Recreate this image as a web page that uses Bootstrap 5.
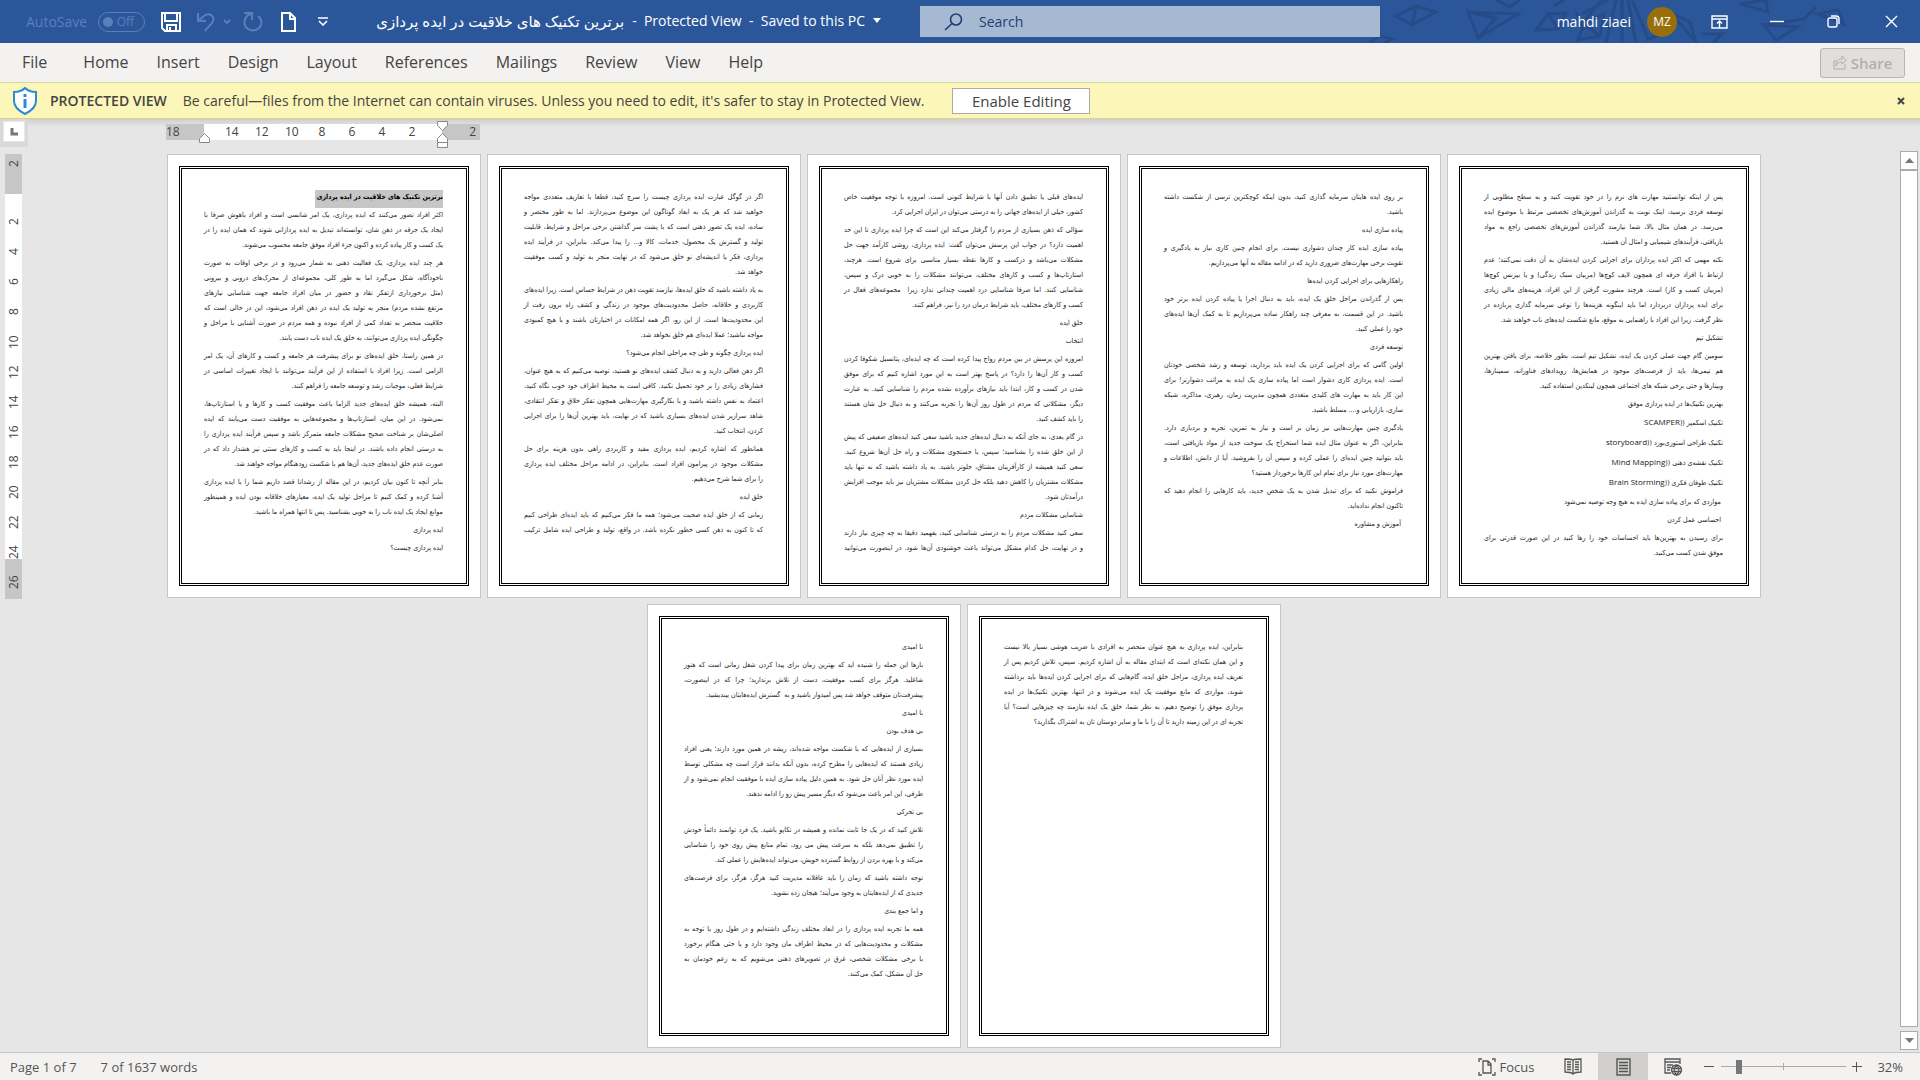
<!DOCTYPE html>
<html lang="en">
<head>
<meta charset="utf-8">
<meta name="viewport" content="width=device-width, initial-scale=1">
<title>برترین تکنیک های خلاقیت در ایده پردازی - Protected View</title>
<link href="https://cdn.jsdelivr.net/npm/bootstrap@5.3.0/dist/css/bootstrap.min.css" rel="stylesheet">
<style>
body{font-family:"Open Sans","DejaVu Sans",sans-serif;background:#e6e6e6;color:#444;font-size:14px;line-height:20px}
svg{display:block;fill:none;stroke:currentColor;flex:none}
button{color:inherit}
.titlebar{height:43px;background:#2b579a;color:#fff;position:relative}
.titlebar .texture{position:absolute;right:0;top:0;color:#264b87}
.titlebar>*:not(.texture){position:relative}
.dim{color:#5b80b9}
.plain-btn{border:0;background:none;padding:0;display:flex;align-items:center;justify-content:center;flex-shrink:0}
.side-start{flex:1 1 0;min-width:0}
.side-end{flex:0 0 540px;padding-right:18px}
.switch-pill{width:47px;height:20px;border:1px solid #5b80b9;border-radius:10px;font-size:12px;margin-left:11px;padding:0 10px 0 4px;color:#5b80b9}
.switch-pill span{width:10px;height:10px;border-radius:50%;background:#5b80b9}
.autosave{padding-left:26px}
.doc-title{font-size:14px;white-space:nowrap;padding-bottom:2px}
.doc-title bdi{font-size:15px}
.find-box{width:460px;height:31px;background:#a6b9d2;color:#1e3f76}
.find-box input{border:0;background:none;color:#1e3f76;outline:0;font-size:14px;padding:0}
.find-box input::placeholder{color:#1e3f76;opacity:1}
.avatar{width:30px;height:30px;border-radius:50%;background:#986f0b;font-size:12px}
.ribbon{height:39px;background:#f3f2f1}
.ribbon .nav{padding-bottom:2px}
.ribbon .nav-link{padding:0 14px;color:#444;font-size:16px;line-height:36px}
.ribbon .nav-item:first-child{margin-right:8px}
.share-btn{height:30px;width:85px;border:1px solid #b9b7b5;border-radius:3px;background:#e1dfdd;color:#b1afad;font-weight:600;font-size:15px;gap:4px;margin-right:15px}
.notice{height:37px;background:#fcf6b8;border-top:1px solid #d8d6a0;border-bottom:1px solid #d6d38c;color:#444;font-size:14px}
.shield{color:#2a8dd4;margin:0 12px}
.enable-btn{width:138px;height:26px;background:#fff;border:1px solid #ababab;font-size:15px;line-height:20px;margin-left:28px}
.workspace{background:linear-gradient(#cfcfcf,#e6e6e6 8px)}
.left-rail{width:28px;padding-left:5px}
.tab-kind{width:28px;height:28px;margin:0 0 7px -5px;background:#d9d9d9;padding:2px 3px}
.tab-kind div{width:22px;height:21px;background:#fff;border:1px solid #e8e8e8;color:#777}
.vruler,.hruler{font-size:12px;line-height:16px;color:#444}
.vruler{width:17px}
.vruler .turned{writing-mode:vertical-rl;transform:rotate(180deg);width:17px;text-align:center;line-height:17px}
.v-out{height:40px;background:#c6c6c6;padding-bottom:6px}
.vruler .v-out.first{text-align:end}
.v-in{height:30px}
.vwhite{height:365px;background:#fff;padding-top:13px}
.sheets{max-width:1594px}
.hruler{height:16px;width:314px;margin:5px 0 0 -1px;position:relative}
.h-out{width:38px;background:#c6c6c6}
.h-in{width:239px;background:#fff;padding-left:13px}
.h-in span{width:30px;text-align:center}
.stop{position:absolute;color:#888}
.stop-left{left:33px;top:9px}
.stop-right{left:271px;top:-3px}
.desk{gap:6px;padding:14px 0 4px}
.paper{width:314px;height:444px;background:#fff;border:1px solid #c6c6c6;padding:11px}
.frame{height:420px;border:3px double #000;padding:21px 23px 0 22px;direction:rtl;font-family:"DejaVu Sans Condensed","DejaVu Sans",sans-serif;font-size:7px;line-height:15px;color:#222;white-space:nowrap}
.frame p{margin:0 0 3px;text-align:justify;text-align-last:justify}
.frame .solo,.frame .tail{display:block;text-align:start;text-align-last:start}
.frame .latin{line-height:17px}
.frame .en{font-family:"Open Sans",sans-serif;font-size:8px;line-height:8px}
.frame h1{font-size:7px;line-height:15px;font-weight:700;margin:0;padding:0 0 3px 2px;width:fit-content;background:#c6c6c6;color:#000}
.scroll-rail{width:20px;padding:32px 2px 2px 0}
.scroll-rail button{width:18px;height:19px;background:#fff;border:1px solid #ababab;color:#777}
.thumb-bar{background:#fff;border:1px solid #ababab}
.status{height:28px;background:#f3f2f1;border-top:1px solid #c6c6c6;font-size:13px;color:#555}
.view-btn{width:50px;height:27px}
.view-btn.on{background:#d2d0ce}
.zoom-slide{-webkit-appearance:none;appearance:none;width:125px;height:16px;margin:0;background:linear-gradient(#aaa,#aaa) center/1px 7px no-repeat,linear-gradient(#aaa,#aaa) center/100% 1px no-repeat}
.zoom-slide::-webkit-slider-thumb{-webkit-appearance:none;width:6px;height:14px;background:#777;border:0}
</style>
<script src="https://cdn.jsdelivr.net/npm/bootstrap@5.3.0/dist/js/bootstrap.bundle.min.js"></script>
</head>
<body class="d-flex flex-column min-vh-100">
<header class="titlebar d-flex align-items-center">
  <svg class="texture" width="580" height="43" viewBox="0 0 580 43" stroke-width="3" aria-hidden="true">
    <path d="M56 16l20-10 20 6-24 13zM76 6l-4 19M128 12l28 6-18 20zM128 12l50 2-40 24M196 30l12-16 18-1-8 16zM208 14l10 15M156 0l14 7 10-7M214 6l10-6M30 42l10-6 12 3-8 4M238 40l6-16 20-10-4 22zM244 24l16 12M242 14l26-14M266 43l10-43M282 43V0M296 43L288 0M308 38L292 0M244 30l-8-18M262 0l-22 26M310 14l20 16-24 10M330 12l26 30-6-20zM362 34l20 0-10 10M400 4l28 8-2-12zM424 25l34 2-22 13zM424 25l40-6 12-12M478 14l20-4 6 14z"/>
  </svg>
  <div class="side-start d-flex align-items-center">
    <label class="dim autosave" for="autosave">AutoSave</label>
    <button id="autosave" class="plain-btn switch-pill justify-content-between" role="switch" aria-checked="false"><span></span>Off</button>
    <button class="plain-btn ms-3" aria-label="Save"><svg width="20" height="20" viewBox="0 0 20 20" stroke-width="2"><path d="M1 1h18v18H4l-3-3zM4 1v8h12V1M6 19v-6h9v6M9 15v3"/></svg></button>
    <button class="plain-btn dim" style="margin-left:15px" aria-label="Undo"><svg width="20" height="20" viewBox="0 0 20 20" stroke-width="2"><path d="M2 1v8h8M2 9l6-5c5-4 11 0 9 5-1 3-5 6-8 10"/></svg></button>
    <button class="plain-btn dim" style="margin-left:7px" aria-label="Undo list"><svg width="8" height="6" viewBox="0 0 8 6" stroke-width="2"><path d="M1 1l3 3 3-3"/></svg></button>
    <button class="plain-btn dim" style="margin-left:12px" aria-label="Redo"><svg width="21" height="20" viewBox="0 0 21 20" stroke-width="2"><path d="M1 1h8v7M8 2C0 4 0 14 5 17c5 3 11 1 13-4 1-4 0-7-3-9"/></svg></button>
    <button class="plain-btn" style="margin-left:16px" aria-label="New"><svg width="17" height="20" viewBox="0 0 17 20" stroke-width="2"><path d="M2 1h8l5 5v13H2zM10 1v6h5"/></svg></button>
    <button class="plain-btn" style="margin-left:21px" aria-label="Customize toolbar"><svg width="10" height="9" viewBox="0 0 10 9" stroke-width="1.6"><path d="M0 1h10M1 4l4 4 4-4"/></svg></button>
    <div class="doc-title ms-5 d-flex align-items-center"><bdi dir="rtl" lang="fa">برترین تکنیک های خلاقیت در ایده پردازی</bdi><span class="ms-2">- &nbsp;Protected View &nbsp;- &nbsp;Saved to this PC</span>
      <svg class="ms-2" width="8" height="5" viewBox="0 0 8 5"><path d="M0 0h8L4 5z" fill="currentColor" stroke="none"/></svg></div>
  </div>
  <div class="find-box d-flex align-items-center px-4">
    <svg width="19" height="18" viewBox="0 0 19 18" stroke-width="1.6"><circle cx="12" cy="6.500" r="5.500"/><path d="M8 10.500L1 17"/></svg>
    <input class="ms-3 flex-grow-1" type="search" placeholder="Search" aria-label="Search">
  </div>
  <div class="side-end d-flex align-items-center justify-content-end">
    <span>mahdi ziaei</span>
    <span class="avatar d-flex align-items-center justify-content-center ms-3">MZ</span>
    <button class="plain-btn" style="margin:0 42px 0 34px" aria-label="Ribbon display options"><svg width="17" height="14" viewBox="0 0 17 14" stroke-width="1.4"><path d="M1 1h15v12H1zM1 4h15M8.500 13V6M6 8.500L8.500 6 11 8.500"/></svg></button>
    <button class="plain-btn" style="margin-right:43px" aria-label="Minimize"><svg width="14" height="12" viewBox="0 0 14 12" stroke-width="1.4"><path d="M0 5.500h14"/></svg></button>
    <button class="plain-btn" style="margin-right:45px" aria-label="Restore"><svg width="13" height="13" viewBox="0 0 13 13" stroke-width="1.4"><path d="M1 5q0-2 2-2h5q2 0 2 2v5q0 2-2 2H3q-2 0-2-2zM4 1h5q3 0 3 3v5"/></svg></button>
    <button class="plain-btn me-1" aria-label="Close"><svg width="13" height="13" viewBox="0 0 13 13" stroke-width="1.4"><path d="M1 1l11 11M12 1L1 12"/></svg></button>
  </div>
</header>

<nav class="ribbon d-flex align-items-center justify-content-between">
  <ul class="nav flex-nowrap ps-2">
    <li class="nav-item"><a class="nav-link" href="#">File</a></li>
    <li class="nav-item"><a class="nav-link" href="#">Home</a></li>
    <li class="nav-item"><a class="nav-link" href="#">Insert</a></li>
    <li class="nav-item"><a class="nav-link" href="#">Design</a></li>
    <li class="nav-item"><a class="nav-link" href="#">Layout</a></li>
    <li class="nav-item"><a class="nav-link" href="#">References</a></li>
    <li class="nav-item"><a class="nav-link" href="#">Mailings</a></li>
    <li class="nav-item"><a class="nav-link" href="#">Review</a></li>
    <li class="nav-item"><a class="nav-link" href="#">View</a></li>
    <li class="nav-item"><a class="nav-link" href="#">Help</a></li>
  </ul>
  <button class="share-btn d-flex align-items-center justify-content-center p-0"><svg width="14" height="15" viewBox="0 0 14 15"><path d="M4 6H1v8h11V9M3 11c0-5 2-7 6-7V1l4 4.500L9 9V7C6 7 4 8 3 11z"/></svg>Share</button>
</nav>

<div class="notice d-flex align-items-center">
  <svg class="shield" width="26" height="28" viewBox="0 0 26 28" stroke-width="2"><path fill="#fff" d="M13 1c3 3 7 4 11 4v9c0 6-5 10-11 13C7 24 2 20 2 14V5c4 0 8-1 11-4z"/><path stroke-width="3" d="M13 12v9M13 7v3"/></svg>
  <span class="fw-semibold">PROTECTED VIEW</span>
  <span class="ms-3">Be careful—files from the Internet can contain viruses. Unless you need to edit, it's safer to stay in Protected View.</span>
  <button class="enable-btn p-0">Enable Editing</button>
  <button class="plain-btn ms-auto" style="margin-right:15px" aria-label="Close message"><svg width="8" height="8" viewBox="0 0 8 8" stroke-width="2"><path d="M1 1l6 6M7 1L1 7"/></svg></button>
</div>

<main class="workspace d-flex flex-grow-1">
  <div class="left-rail flex-shrink-0">
    <div class="tab-kind"><div class="d-flex align-items-center justify-content-center"><svg width="8" height="8" viewBox="0 0 8 8" stroke-width="3"><path d="M2 0v6h6"/></svg></div></div>
    <div class="vruler">
      <div class="turned v-out first">2</div>
      <div class="vwhite"><div class="turned v-in">2</div><div class="turned v-in">4</div><div class="turned v-in">6</div><div class="turned v-in">8</div><div class="turned v-in">10</div><div class="turned v-in">12</div><div class="turned v-in">14</div><div class="turned v-in">16</div><div class="turned v-in">18</div><div class="turned v-in">20</div><div class="turned v-in">22</div><div class="turned v-in">24</div></div>
      <div class="turned v-out">26</div>
    </div>
  </div>

  <div class="flex-grow-1">
    <div class="sheets mx-auto">
      <div class="hruler d-flex">
        <div class="h-out">18</div>
        <div class="h-in d-flex"><span>14</span><span>12</span><span>10</span><span>8</span><span>6</span><span>4</span><span>2</span></div>
        <div class="h-out flex-grow-1 text-end pe-1">2</div>
        <svg class="stop stop-left" width="11" height="10" viewBox="0 0 11 10"><path fill="#fff" d="M.5 9.500v-4l5-5 5 5v4z"/></svg>
        <svg class="stop stop-right" width="11" height="28" viewBox="0 0 11 28"><path fill="#fff" d="M.5.5h10v4l-5 5-5-5zM.5 21.500v-4l5-5 5 5v4zM.5 21.500h10v5H.5z"/></svg>
      </div>
    </div>
    <div class="desk d-flex flex-wrap justify-content-center" lang="fa">

<article class="paper"><div class="frame">
<h1>برترین تکنیک های خلاقیت در ایده پردازی</h1>
<p>اکثر افراد تصور می‌کنند که ایده پردازی، یک امر شانسی است و افراد باهوش صرفا با<br>ایجاد یک جرقه در ذهن شان، توانسته‌اند تبدیل به ایده پردازانی شوند که همان ایده را در<span class="tail">یک کسب و کار پیاده کرده و اکنون جزء افراد موفق جامعه محسوب می‌شوند.</span></p>
<p>هر چند ایده پردازی، یک فعالیت ذهنی به شمار می‌رود و در برخی اوقات به صورت<br>ناخودآگاه، شکل می‌گیرد اما به طور کلی، مجموعه‌ای از محرک‌های درونی و بیرونی<br>(مثل برخورداری ازتفکر نقاد و حضور در میان افراد جامعه جهت شناسایی نیازهای<br>مرتفع نشده مردم) منجر به تولید یک ایده در ذهن افراد می‌شود، این در حالی است که<br>خلاقیت منحصر به تعداد کمی از افراد نبوده و همه مردم در صورت آشنایی با مراحل و<span class="tail">چگونگی ایده پردازی می‌توانند، به خلق یک ایده ناب دست یابند.</span></p>
<p>در همین راستا، خلق ایده‌های نو برای پیشرفت هر جامعه و کسب و کارهای آن، یک امر<br>الزامی است. زیرا افراد با استفاده از این فرآیند می‌توانند با ایجاد تغییرات اساسی در<span class="tail">شرایط فعلی، موجبات رشد و توسعه جامعه را فراهم کنند.</span></p>
<p>البته، همیشه خلق ایده‌های جدید الزاما باعث موفقیت کسب و کارها و یا استارتاپ‌ها،<br>نمی‌شود. در این میان، استارتاپ‌ها و مجموعه‌هایی به موفقیت دست می‌یابند که ایده<br>اصلی‌شان بر شناخت صحیح مشکلات جامعه متمرکز باشد و سپس فرآیند ایده پردازی را<br>به درستی انجام داده باشند. در اینجا باید به کسب و کارهای سنتی نیز هشدار داد که در<span class="tail">صورت عدم خلق ایده‌های جدید، آن‌ها هم با شکست زودهنگام مواجه خواهند شد.</span></p>
<p>بنابر آنچه تا کنون بیان کردیم، در این مقاله از رشدانا قصد داریم شما را با ایده پردازی<br>آشنا کرده و کمک کنیم تا مراحل تولید یک ایده، معیارهای خلاقانه بودن ایده و همینطور<span class="tail">موانع ایجاد یک ایده ناب را به خوبی بشناسید. پس تا انتها همراه ما باشید.</span></p>
<p class="solo">ایده پردازی</p>
<p class="solo">ایده پردازی چیست؟</p>
</div></article>

<article class="paper"><div class="frame">
<p>اگر در گوگل عبارت ایده پردازی چیست را سرچ کنید، قطعا با تعاریف متعددی مواجه<br>خواهید شد که هر یک به ابعاد گوناگون این موضوع می‌پردازند. اما به طور مختصر و<br>ساده، ایده یک تصور ذهنی است که با پشت سر گذاشتن برخی مراحل و شرایط، قابلیت<br>تولید و گسترش یک محصول، خدمات، کالا و... را پیدا می‌کند. بنابراین، در فرآیند ایده<br>پردازی، فکر یا اندیشه‌ای نو خلق می‌شود که در نهایت منجر به تولید و کسب موفقیت<span class="tail">خواهد شد.</span></p>
<p>به یاد داشته باشید که خلق ایده‌ها، نیازمند تقویت ذهن در شرایط حساس است. زیرا ایده‌های<br>کاربردی و خلاقانه، حاصل محدودیت‌های موجود در زندگی و کشف راه برون رفت از<br>این محدودیت‌ها است. از این رو، اگر همه امکانات در اختیارتان باشند و با هیچ کمبودی<span class="tail">مواجه نباشید؛ عملا ایده‌ای هم خلق نخواهد شد.</span></p>
<p class="solo">ایده پردازی چگونه و طی چه مراحلی انجام می‌شود؟</p>
<p>اگر ذهن فعالی دارید و به دنبال کشف ایده‌های نو هستید، توصیه می‌کنیم که به هیچ عنوان،<br>فشارهای زیادی را بر خود تحمیل نکنید. کافی است به محیط اطراف خود خوب نگاه کنید،<br>اعتماد به نفس داشته باشید و با بکارگیری مهارت‌هایی همچون تفکر خلاق و تفکر انتقادی،<br>شاهد سرازیر شدن ایده‌های بسیاری باشید که در نهایت، باید بهترین آن‌ها را برای اجرایی<span class="tail">کردن، انتخاب کنید.</span></p>
<p>همانطور که اشاره کردیم، ایده پردازی مفید و کاربردی راهی بدون هزینه برای حل<br>مشکلات موجود در پیرامون افراد است. بنابراین، در ادامه مراحل مختلف ایده پردازی<span class="tail">را برای شما شرح می‌دهیم.</span></p>
<p class="solo">خلق ایده</p>
<p>زمانی که از خلق ایده صحبت می‌شود؛ همه ما فکر می‌کنیم که باید ایده‌ای طراحی کنیم<br>که تا کنون به ذهن کسی خطور نکرده باشد. در واقع، تولید و طراحی ایده شامل ترکیب</p>
</div></article>

<article class="paper"><div class="frame">
<p>ایده‌های قبلی یا تطبیق دادن آنها با شرایط کنونی است. امروزه با توجه موقعیت خاص<span class="tail">کشور، خیلی از ایده‌های جهانی را به درستی می‌توان در ایران اجرایی کرد.</span></p>
<p>سؤالی که ذهن بسیاری از مردم را گرفتار می‌کند این است که چرا ایده پردازی تا این حد<br>اهمیت دارد؟ در جواب این پرسش می‌توان گفت: ایده پردازی، روشی کارآمد جهت حل<br>مشکلات می‌باشد و درکسب و کارها نقطه بسیار مناسبی برای شروع است. هرچند،<br>استارتاپ‌ها و کسب و کارهای مختلف، می‌توانند مشکلات را به خوبی درک و سپس،<br>شناسایی کنند. اما صرفا شناسایی درد اهمیت چندانی ندارد زیرا&nbsp; مجموعه‌های فعال در<span class="tail">کسب و کارهای مختلف، باید شرایط درمان درد را نیز، فراهم کنند.</span></p>
<p class="solo">خلق ایده</p>
<p class="solo">انتخاب</p>
<p>امروزه این پرسش در بین مردم رواج پیدا کرده است که چه ایده‌ای، پتانسیل شکوفا کردن<br>کسب و کار آن‌ها را دارد؟ در پاسخ بهتر است به این مورد اشاره کنیم که برای موفق<br>شدن در کسب و کار، ابتدا باید نیازهای برآورده نشده مردم را شناسایی کنید. به عبارت<br>دیگر، مشکلاتی که مردم در طول روز آن‌ها را تجربه می‌کنند و به دنبال حل شان هستند<span class="tail">را باید کشف کنید.</span></p>
<p>در گام بعدی، به جای آنکه به دنبال ایده‌های جدید باشید سعی کنید ایده‌های ضعیفی که پیش<br>از این خلق شده را بشناسید؛ سپس، با جستجوی مشکلات و راه حل آن‌ها شروع کنید.<br>سعی کنید همیشه از کارآفرینان مشتاق، جلوتر باشید. به یاد داشته باشید که نه تنها باید<br>مشکلات مشتریان را کاهش دهید بلکه حل کردن مشکلات مشتریان نیز باید موجب افزایش<span class="tail">درآمدتان شود.</span></p>
<p class="solo">شناسایی مشکلات مردم</p>
<p>سعی کنید مشکلات مردم را به درستی شناسایی کنید، بفهمید دقیقا به چه چیزی نیاز دارند<br>و در نهایت، حل کدام مشکل می‌تواند باعث خوشنودی آن‌ها شود. در اینصورت می‌توانید</p>
</div></article>

<article class="paper"><div class="frame">
<p>بر روی ایده هایتان سرمایه گذاری کنید، بدون اینکه کوچکترین ترسی از شکست داشته<span class="tail">باشید.</span></p>
<p class="solo">پیاده سازی ایده</p>
<p>پیاده سازی ایده کار چندان دشواری نیست. برای انجام چنین کاری نیاز به یادگیری و<span class="tail">تقویت برخی مهارت‌های ضروری دارید که در ادامه مقاله به آنها می‌پردازیم.</span></p>
<p class="solo">راهکارهایی برای اجرایی کردن ایده‌ها</p>
<p>پس از گذراندن مراحل خلق یک ایده، باید به دنبال اجرا یا پیاده کردن ایده برتر خود<br>باشید. در این قسمت، به معرفی چند راهکار ساده می‌پردازیم تا به کمک آن‌ها ایده‌های<span class="tail">خود را عملی کنید.</span></p>
<p class="solo">توسعه فردی</p>
<p>اولین گامی که برای اجرایی کردن یک ایده باید بردارید، توسعه و رشد شخصی خودتان<br>است. ایده پردازی کاری دشوار است اما پیاده سازی یک ایده به مراتب دشوارتر! برای<br>این کار باید به مهارت های کلیدی متعددی همچون مدیریت زمان، رهبری، مذاکره، شبکه<span class="tail">سازی، بازاریابی و.... مسلط باشید.</span></p>
<p>یادگیری چنین مهارت‌هایی نیز زمان بر است و نیاز به تمرین، تجربه و بردباری دارد.<br>بنابراین، اگر به عنوان مثال ایده شما استخراج یک سوخت جدید از مواد بازیافتی است،<br>باید بتوانید چنین ایده‌ای را عملی کرده و سپس آن را بفروشید. آیا از دانش، اطلاعات و<span class="tail">مهارت‌های مورد نیاز برای تمام این کارها برخوردار هستید؟</span></p>
<p>فراموش نکنید که برای تبدیل شدن به یک شخص جدید، باید کارهایی را انجام دهید که<span class="tail">تاکنون انجام نداده‌اید.</span></p>
<p class="solo">&nbsp;آموزش و مشاوره</p>
</div></article>

<article class="paper"><div class="frame">
<p>پس از اینکه توانستنید مهارت های نرم را در خود تقویت کنید و به سطح مطلوبی از<br>توسعه فردی برسید، اینک نوبت به گذراندن آموزش‌های تخصصی مرتبط با موضوع ایده<br>می‌رسد. در همان مثال بالا، شما نیازمند گذراندن آموزش‌های تخصصی راجع به مواد<span class="tail">بازیافتی، فرآیندهای شیمیایی و امثال آن هستید.</span></p>
<p>نکته مهمی که اکثر ایده پردازان برای اجرایی کردن ایده‌شان به آن دقت نمی‌کنند؛ عدم<br>ارتباط با افراد حرفه ای همچون لایف کوچ‌ها (مربیان سبک زندگی) و یا بیزنس کوچ‌ها<br>(مربیان کسب و کار) است. هرچند مشورت گرفتن از این افراد، هزینه‌های مالی زیادی<br>برای ایده پردازان دربردارد اما باید اینگونه هزینه‌ها را نوعی سرمایه گذاری پربازده در<span class="tail">نظر گرفت. زیرا این افراد با راهنمایی به موقع، مانع شکست ایده‌های ناب خواهند شد.</span></p>
<p class="solo">تشکیل تیم</p>
<p>سومین گام جهت عملی کردن یک ایده، تشکیل تیم است. بطور خلاصه، برای یافتن بهترین<br>هم تیمی‌ها، باید از فرصت‌های موجود در همایش‌ها، رویدادهای فناورانه، سمینارها،<span class="tail">وبینارها و حتی برخی شبکه های اجتماعی همچون لینکدین استفاده کنید.</span></p>
<p class="solo">بهترین تکنیک‌ها در ایده پردازی موفق</p>
<p class="solo latin">تکنیک اسکمپر ((<span class="en">SCAMPER</span></p>
<p class="solo latin">تکنیک طراحی استوری‌بورد ((<span class="en">storyboard</span></p>
<p class="solo latin">تکنیک نقشه‌ی ذهنی ((<span class="en">Mind Mapping</span></p>
<p class="solo latin">تکنیک طوفان فکری ((<span class="en">Brain Storming</span></p>
<p class="solo">&nbsp;مواردی که برای پیاده سازی ایده به هیچ وجه توصیه نمی‌شود</p>
<p class="solo">&nbsp;احساسی عمل کردن</p>
<p>برای رسیدن به بهترین‌ها باید احساسات خود را رها کنید در این صورت قدرتی برای<span class="tail">موفق شدن کسب می‌کنید.</span></p>
</div></article>

<article class="paper"><div class="frame">
<p class="solo">نا امیدی</p>
<p>بارها این جمله را شنیده اید که بهترین زمان برای پیدا کردن شغل زمانی است که هنوز<br>شاغلید. هرگز برای کسب موفقیت، دست از تلاش برندارید؛ چرا که در اینصورت،<span class="tail">پیشرفت‌تان متوقف خواهد شد پس امیدوار باشید و به&nbsp; گسترش ایده‌هایتان بیندیشید.</span></p>
<p class="solo">نا امیدی</p>
<p class="solo">بی هدف بودن</p>
<p>بسیاری از ایده‌هایی که با شکست مواجه شده‌اند، ریشه در همین مورد دارند؛ یعنی افراد<br>زیادی هستند که ایده‌هایی را مطرح کرده، بدون آنکه بدانند قرار است چه مشکلی توسط<br>ایده مورد نظر آنان حل شود. به همین دلیل پیاده سازی ایده با موفقیت انجام نمی‌شود و از<span class="tail">طرفی، این امر باعث می‌شود که دیگر مسیر پیش رو را ادامه ندهند.</span></p>
<p class="solo">بی تحرکی</p>
<p>تلاش کنید که در یک جا ثابت نمانده و همیشه در تکاپو باشید. یک فرد توانمند دائماً خودش<br>را تطبیق نمی‌دهد بلکه به سرعت پیش می رود، تمام منابع پیش روی خود را شناسایی<span class="tail">می‌کند و با بهره بردن از روابط گسترده خویش، می‌تواند ایده‌هایش را عملی کند.</span></p>
<p>توجه داشته باشید که زمان را باید عاقلانه مدیریت کنید هرگز، هرگز، برای فرصت‌های<span class="tail">جدیدی که از ایده‌هایتان به وجود می‌آیند؛ هیجان زده نشوید.</span></p>
<p class="solo">و اما جمع بندی</p>
<p>همه ما تجربه ایده پردازی را در ابعاد مختلف زندگی داشته‌ایم و در طول روز با توجه به<br>مشکلات و محدودیت‌هایی که در محیط اطراف مان وجود دارد و یا حتی هنگام برخورد<br>با برخی مشکلات شخصی، غرق در تصویرهای ذهنی می‌شویم که به زعم خودمان به<span class="tail">حل آن مشکل، کمک می‌کنند.</span></p>
</div></article>

<article class="paper"><div class="frame">
<p>بنابراین، ایده پردازی به هیچ عنوان منحصر به افرادی با ضریب هوشی بسیار بالا نیست<br>و این همان نکته‌ای است که ابتدای مقاله به آن اشاره کردیم. سپس، تلاش کردیم پس از<br>تعریف ایده پردازی، مراحل خلق ایده، گام‌هایی که برای اجرایی کردن ایده‌ها باید برداشته<br>شوند، مواردی که مانع موفقیت یک ایده می‌شوند و در انتها، بهترین تکنیک‌ها در ایده<br>پردازی موفق را توضیح دهیم. به نظر شما، خلق یک ایده نیازمند چه چیزهایی است؟ آیا<span class="tail">تجربه ای در این زمینه دارید تا آن را با ما و سایر دوستان تان به اشتراک بگذارید؟</span></p>
</div></article>

    </div>
  </div>

  <div class="scroll-rail d-flex flex-column flex-shrink-0">
    <button class="plain-btn" aria-label="Scroll up"><svg width="9" height="5" viewBox="0 0 9 5"><path d="M0 5h9L4.500 0z" fill="currentColor" stroke="none"/></svg></button>
    <div class="thumb-bar flex-grow-1 mb-1"></div>
    <button class="plain-btn" aria-label="Scroll down"><svg width="9" height="5" viewBox="0 0 9 5"><path d="M0 0h9L4.500 5z" fill="currentColor" stroke="none"/></svg></button>
  </div>
</main>

<footer class="status d-flex align-items-center justify-content-between">
  <div class="d-flex gap-4" style="padding-left:10px"><span>Page 1 of 7</span><span>7 of 1637 words</span></div>
  <div class="d-flex align-items-center" style="padding-right:17px">
    <button class="plain-btn" style="margin-right:14px;gap:3px"><svg width="18" height="18" viewBox="0 0 18 18" stroke-width="1.3"><path d="M1 4V1h3M14 1h3v3M17 14v3h-3M4 17H1v-3M5 3h5l3 3v9H5zM10 3v4h3"/></svg>Focus</button>
    <button class="plain-btn view-btn" aria-label="Read mode"><svg width="18" height="17" viewBox="0 0 18 17" stroke-width="1.300"><path d="M9 2C7 1 4 1 1 1v13c3 0 6 0 8 2 2-2 5-2 8-2V1c-3 0-6 0-8 1zM9 2v14M3 4h4M3 6.500h4M3 9h4M3 11.500h4M11 4h4M11 6.500h4M11 9h4M11 11.500h4"/></svg></button>
    <button class="plain-btn view-btn on" aria-label="Print layout"><svg width="15" height="18" viewBox="0 0 15 18" stroke-width="1.400"><path d="M1 1h13v16H1zM3 4.500h9M3 7.500h9M3 10.500h9M3 13.500h9"/></svg></button>
    <button class="plain-btn view-btn" aria-label="Web layout"><svg width="19" height="18" viewBox="0 0 19 18" stroke-width="1.300"><path d="M7 15H1V1h15v5M1 4h15M3 7h6M3 9.500h4M3 12h3"/><circle cx="12.500" cy="12" r="5" fill="#f3f2f1"/><path d="M8 10.500h9M8 13.500h9M12.500 7c-3 3-3 7 0 10M12.500 7c3 3 3 7 0 10"/></svg></button>
    <button class="plain-btn" style="margin:0 7px 0 6px" aria-label="Zoom out"><svg width="10" height="10" viewBox="0 0 10 10"><path d="M0 4.500h10"/></svg></button>
    <input class="zoom-slide" type="range" min="0" max="100" value="12" aria-label="Zoom">
    <button class="plain-btn" style="margin:0 15px 0 6px" aria-label="Zoom in"><svg width="10" height="10" viewBox="0 0 10 10"><path d="M0 4.500h10M4.500 0v10"/></svg></button>
    <span>32%</span>
  </div>
</footer>
</body>
</html>
